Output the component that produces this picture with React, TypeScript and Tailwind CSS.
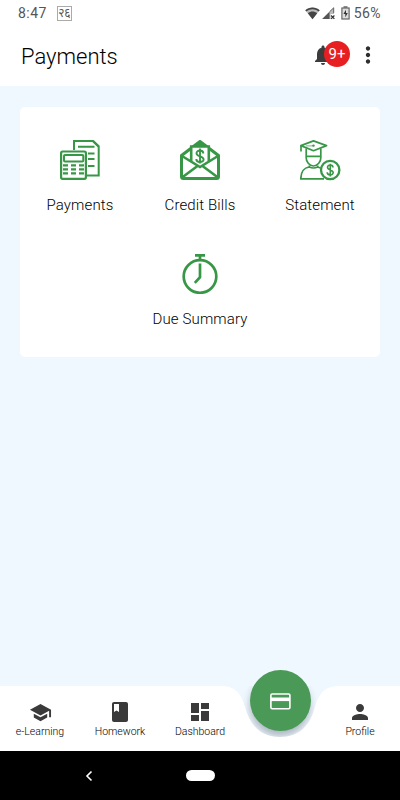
import type { ReactNode } from "react";
import { MdBook, MdDashboard, MdMoreVert, MdNotifications, MdPerson, MdSchool } from "react-icons/md";

function PaymentsIcon() {
	return (
		<svg width="40" height="40" viewBox="0 0 40 40" fill="none" stroke="currentColor">
			<path d="M14 10V1h19L38.700 6.500V35.500H27" strokeWidth="2" />
			<path d="M33 1l5.700 5.500" strokeWidth="2.400" />
			<path d="M18 6.800h16.500M28 13.500h6.500M28 19h6.500M28 26h6.500" strokeWidth="2" />
			<rect x="1.100" y="11.500" width="24.800" height="27.300" rx="1.500" strokeWidth="2.200" />
			<rect x="4" y="15" width="19.300" height="6.600" rx="1" strokeWidth="2" />
			<path d="M3 25.400h21.300M3 29.400h21.300M3 33.400h21.300" strokeWidth="2.200" strokeDasharray="5 3" />
		</svg>
	);
}

function CreditBillsIcon() {
	return (
		<svg width="40" height="40" viewBox="0 0 40 40" fill="none" stroke="currentColor">
			<path d="M1.500 15.500v21q0 2 2 2h33q2 0 2-2v-21L20 1.500z" strokeWidth="3" strokeLinejoin="round" />
			<path d="M11 22V6.500h18V22L20 27.500z" fill="white" stroke="none" />
			<path d="M11.200 21V6.500h17.600V21" strokeWidth="2.600" />
			<path d="M13.500 6L20 1.500 26.500 6z" fill="currentColor" strokeWidth="1" />
			<path d="M2 16l18 11 18-11M2 37.500l15.500-11.500M38 37.500L22.500 26" strokeWidth="2.600" />
			<path
				d="M23.300 13.500C23.300 9.500 16.500 9.500 16.500 13.300C16.500 17.200 23.600 15.500 23.600 19.400C23.600 23 16.300 23 16.300 19M20 8.500v15"
				strokeWidth="1.900"
			/>
		</svg>
	);
}

function StatementIcon() {
	return (
		<svg width="41" height="41" viewBox="0 0 41 41" fill="none" stroke="currentColor" strokeWidth="1.700">
			<path d="M.9 5.600L13.500.9l13 4.700-13 5.100z" strokeLinejoin="round" />
			<path d="M1 5.600V11.500" />
			<path d="M6 5.900h7" strokeWidth=".7" />
			<circle cx="13.500" cy="5.600" r="1.200" fill="currentColor" stroke="none" />
			<path d="M6.200 8.500V18c0 3.500 3 8 7.300 8s7.300-4.500 7.300-8V8.500M6.200 16.400h14.600" />
			<path d="M9.300 25.500v1.500c-5 .6-8.500 5-8.500 11.900H24M17.700 25.500v1.500l3.300 1.200M9.300 27q4.200 2 8.400 0" />
			<circle cx="30.200" cy="30" r="9.200" fill="white" strokeWidth="2.300" />
			<path
				d="M33 27.500C33 24.200 27.500 24.200 27.500 27.300C27.500 30.500 33.200 29.300 33.200 32.600C33.200 35.700 27.200 35.700 27.200 32.200M30.300 23.800v12.600"
				strokeWidth="1.600"
			/>
		</svg>
	);
}

function DueSummaryIcon() {
	return (
		<svg width="40" height="40" viewBox="0 0 40 40" fill="none" stroke="currentColor" strokeWidth="2.700">
			<circle cx="20" cy="22.500" r="16.300" />
			<path d="M15 1.400h10M20 1.400V6M20 9.500v13.700L14.800 28.800" />
		</svg>
	);
}

function CardIcon() {
	return (
		<svg width="21" height="17" viewBox="0 0 21 17" fill="none" stroke="white">
			<rect x=".9" y="1" width="19" height="14.800" rx="1.200" strokeWidth="1.600" />
			<path d="M1 6.300h19" strokeWidth="3.600" />
		</svg>
	);
}

function WifiIcon() {
	return (
		<svg width="15" height="13" viewBox="0 0 15 13">
			<path d="M.3 3.300C4.500-.3 10.500-.3 14.700 3.300L7.500 12.200z" fill="#bbb" />
			<path
				d="M.3 3.300C4.500-.3 10.500-.3 14.700 3.300l-1 1.200C9.800 1.400 5.200 1.400 1.300 4.500zM2.800 6.300C5.600 4 9.400 4 12.200 6.300L7.500 12.200z"
				fill="#444"
			/>
		</svg>
	);
}

function SignalIcon() {
	return (
		<svg width="13" height="13" viewBox="0 0 13 13">
			<path d="M.2 12L12 .3V7H8.500v5z" fill="#bbb" />
			<path d="M.2 12L7.500 4.800V12z" fill="#555" />
			<path d="M7.500 4.800L11.700.8V6" fill="none" stroke="#666" />
			<path d="M9 8.500l3.400 3.400M12.400 8.500L9 11.900" stroke="#333" strokeWidth="1.200" />
		</svg>
	);
}

function BatteryIcon() {
	return (
		<svg width="9" height="14" viewBox="0 0 9 14" fill="none">
			<path d="M2.500 1h4" stroke="#666" strokeWidth="1.500" />
			<rect x=".9" y="2" width="7.200" height="11" fill="#ddd" stroke="#666" strokeWidth="1.200" />
			<path d="M5 3.800L2.400 8H4.300v3.300L6.800 7H5z" fill="#333" />
		</svg>
	);
}

function StatusBar() {
	return (
		<div className="flex h-6 items-center justify-between pl-[18px] pr-[19px] pt-[2px] text-[14px] text-[#555]">
			<div className="flex items-center gap-[10px]">
				<span className="tracking-[0.45px]">8:47</span>
				<span className="flex h-[15px] w-[15px] items-center justify-center border border-[#aaa] text-[12px] leading-none tracking-[-0.3px]">
					२६
				</span>
			</div>
			<div className="flex items-center">
				<WifiIcon />
				<span className="ml-[2px] mr-[6px]">
					<SignalIcon />
				</span>
				<BatteryIcon />
				<span className="ml-[4px] tracking-[0.4px]">56%</span>
			</div>
		</div>
	);
}

function Header() {
	return (
		<header className="flex h-[62px] items-center justify-between pl-[21px] pr-5">
			<h1 className="pt-[3px] text-[22px] font-light text-black">Payments</h1>
			<div className="flex items-center">
				<div className="relative mr-[5px] w-[39px]">
					<MdNotifications size={24} color="#3c3c3c" />
					<span className="absolute -top-[2px] right-0 flex h-[26px] w-[26px] items-center justify-center rounded-full bg-[#e71f20] text-[15px] text-white">
						9+
					</span>
				</div>
				<MdMoreVert size={26} color="#2e2e2e" className="-mr-[1px]" />
			</div>
		</header>
	);
}

function Tile({ icon, label }: { icon: ReactNode; label: string }) {
	return (
		<div className="flex h-[113.500px] w-[120px] flex-col items-center text-[#379746]">
			<div className="flex h-[41px] items-start">{icon}</div>
			<span className="mt-[12px] whitespace-nowrap text-[15px] font-light leading-6 tracking-[0.12px] text-black">
				{label}
			</span>
		</div>
	);
}

function NavItem({ icon, label }: { icon: ReactNode; label: string }) {
	return (
		<div className="flex w-20 flex-col items-center pt-[14px] text-[#3a3a3a]">
			<div className="flex h-6 items-center">{icon}</div>
			<span className="mt-[1px] text-[10.500px] font-light leading-[14px] text-black">{label}</span>
		</div>
	);
}

function BottomNav() {
	return (
		<nav className="relative h-[65px]">
			<svg className="absolute inset-0" width="400" height="65" viewBox="0 0 400 65">
				<defs>
					<filter id="fabBlur" x="-30%" y="-30%" width="160%" height="160%">
						<feGaussianBlur stdDeviation="4" />
					</filter>
				</defs>
				<circle cx="280" cy="20" r="30" fill="#a9b2bd" filter="url(#fabBlur)" />
				<path
					d="M0 0H222C237 0 242 11 245 21C250 40 261 51 280 51S310 40 315 21C318 11 323 0 338 0H400V65H0z"
					fill="white"
				/>
			</svg>
			<div className="relative flex">
				<NavItem icon={<MdSchool size={23} />} label="e-Learning" />
				<NavItem icon={<MdBook size={24} />} label="Homework" />
				<NavItem icon={<MdDashboard size={24} />} label="Dashboard" />
				<div className="flex w-20 justify-center">
					<button className="-mt-[16px] flex h-[61px] w-[61px] items-center justify-center rounded-full bg-[#4a9957] pt-[1px]">
						<CardIcon />
					</button>
				</div>
				<NavItem icon={<MdPerson size={24} />} label="Profile" />
			</div>
		</nav>
	);
}

function SystemBar() {
	return (
		<div className="grid h-[49px] grid-cols-[177px_46px_177px] items-center bg-black">
			<svg className="mx-auto" width="8" height="12" viewBox="0 0 8 12" fill="none" stroke="white" strokeWidth="1.600">
				<path d="M6.500 1.500L2 6l4.500 4.500" />
			</svg>
			<div className="mx-auto h-[11px] w-[29px] rounded-full bg-white" />
		</div>
	);
}

export default function App() {
	return (
		<div className="flex h-[800px] w-[400px] flex-col overflow-hidden bg-white font-['Roboto','Noto_Sans',sans-serif]">
			<StatusBar />
			<Header />
			<div className="flex flex-1 flex-col bg-[#f0f8ff]">
				<main className="flex-1 px-5 pt-[21px]">
					<section className="flex h-[250px] flex-wrap content-start justify-center rounded-[5px] bg-white pt-[33px]">
						<Tile icon={<PaymentsIcon />} label="Payments" />
						<Tile icon={<CreditBillsIcon />} label="Credit Bills" />
						<Tile icon={<StatementIcon />} label="Statement" />
						<Tile icon={<DueSummaryIcon />} label="Due Summary" />
					</section>
				</main>
				<BottomNav />
			</div>
			<SystemBar />
		</div>
	);
}
